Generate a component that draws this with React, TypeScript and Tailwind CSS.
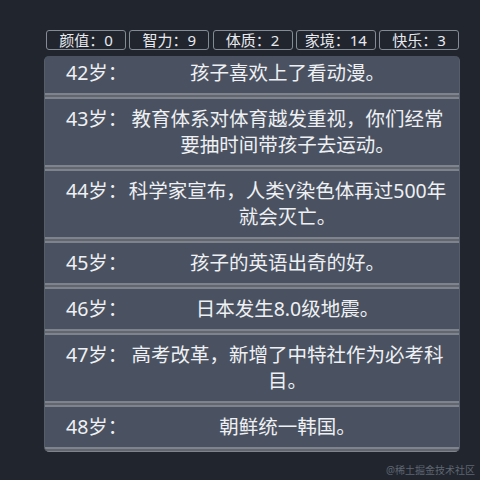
import React from "react";

const stats = [
  ["颜值", "0"],
  ["智力", "9"],
  ["体质", "2"],
  ["家境", "14"],
  ["快乐", "3"],
];

const events: [string, string][] = [
  ["42岁：", "孩子喜欢上了看动漫。"],
  ["43岁：", "教育体系对体育越发重视，你们经常要抽时间带孩子去运动。"],
  ["44岁：", "科学家宣布，人类Y染色体再过500年就会灭亡。"],
  ["45岁：", "孩子的英语出奇的好。"],
  ["46岁：", "日本发生8.0级地震。"],
  ["47岁：", "高考改革，新增了中特社作为必考科目。"],
  ["48岁：", "朝鲜统一韩国。"],
];

export default function App() {
  return (
    <div
      className="relative w-[480px] h-[480px] overflow-hidden bg-[#21252e] text-[#eef0f3]"
      style={{ fontFamily: '"Noto Sans", "Noto Sans CJK SC", sans-serif' }}
    >
      <div className="ml-[44px] w-[416px] pt-[30px]">
        <div className="flex justify-between pl-[2px] pr-[1px]">
          {stats.map(([k, v]) => (
            <div
              key={k}
              className="w-[80px] h-[20px] rounded-[3px] border border-[#858b94] flex items-center justify-center text-[15px] leading-[18px] text-[#e8eaee]"
            >
              {k}：{v}
            </div>
          ))}
        </div>
        <div className="mt-[6px] h-[396px] overflow-hidden rounded-[5px] bg-[#4a5261] border-x border-[#565e6c]">
          {events.map(([age, text], i) => (
            <div key={age}>
              <div
                className={`flex items-start pl-[21px] pr-[12px] pb-[7px] text-[19.5px] leading-[26px] ${
                  i === 0 ? "pt-[4px]" : "pt-[7px]"
                }`}
              >
                <div className="w-[62px] shrink-0 whitespace-nowrap">{age}</div>
                <div className="flex-1 text-center">{text}</div>
              </div>
              <div className="h-[6px] border-y-2 border-[#7f848c] bg-[#62676f]" />
            </div>
          ))}
        </div>
      </div>
      <div
        className="absolute right-[5px] bottom-[4px] text-[10px] leading-[12px] text-[#5f6571]"
      >
        @稀土掘金技术社区
      </div>
    </div>
  );
}
